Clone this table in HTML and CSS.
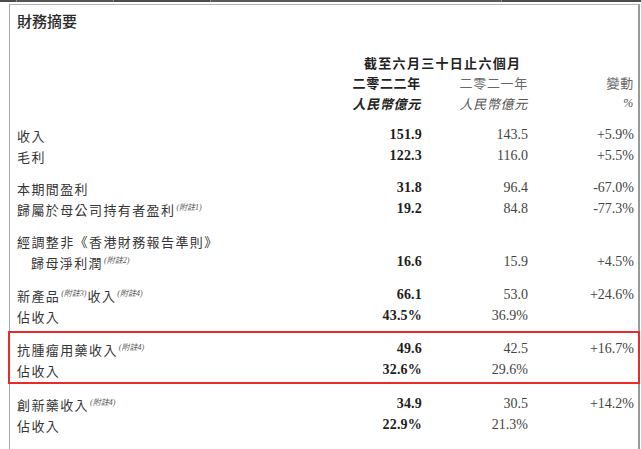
FILE: index.html
```html
<!DOCTYPE html>
<html lang="zh-Hant">
<head>
<meta charset="utf-8">
<title>財務摘要</title>
<link rel="stylesheet" href="styles.css">
</head>
<body>
<div class="strip">
  <span class="seg seg-a"></span>
  <span class="seg seg-b"></span>
  <span class="seg seg-c"></span>
  <span class="seg seg-d"></span>
  <span class="seg seg-e"></span>
</div>
<div class="frame">
  <h1 class="title">財務摘要</h1>

  <div class="head">
    <div class="row">
      <span class="period">截至六月三十日止六個月</span>
    </div>
    <div class="row">
      <span></span>
      <span class="cell hd-strong">二零二二年</span>
      <span class="cell hd-light">二零二一年</span>
      <span class="cell hd-light">變動</span>
    </div>
    <div class="row">
      <span></span>
      <span class="cell unit-strong">人民幣億元</span>
      <span class="cell unit-light">人民幣億元</span>
      <span class="cell unit-light pct">%</span>
    </div>
  </div>

  <div class="group first">
    <div class="row">
      <span class="label">收入</span>
      <span class="cell num b">151.9</span>
      <span class="cell num">143.5</span>
      <span class="cell num">+5.9%</span>
    </div>
    <div class="row">
      <span class="label">毛利</span>
      <span class="cell num b">122.3</span>
      <span class="cell num">116.0</span>
      <span class="cell num">+5.5%</span>
    </div>
  </div>

  <div class="group">
    <div class="row">
      <span class="label">本期間盈利</span>
      <span class="cell num b">31.8</span>
      <span class="cell num">96.4</span>
      <span class="cell num">-67.0%</span>
    </div>
    <div class="row">
      <span class="label">歸屬於母公司持有者盈利<span class="note">(附註1)</span></span>
      <span class="cell num b">19.2</span>
      <span class="cell num">84.8</span>
      <span class="cell num">-77.3%</span>
    </div>
  </div>

  <div class="group">
    <div class="row">
      <span class="label">經調整非《香港財務報告準則》</span>
    </div>
    <div class="row">
      <span class="label indent">歸母淨利潤<span class="note">(附註2)</span></span>
      <span class="cell num b">16.6</span>
      <span class="cell num">15.9</span>
      <span class="cell num">+4.5%</span>
    </div>
  </div>

  <div class="group g4">
    <div class="row">
      <span class="label">新產品<span class="note">(附註3)</span>收入<span class="note">(附註4)</span></span>
      <span class="cell num b">66.1</span>
      <span class="cell num">53.0</span>
      <span class="cell num">+24.6%</span>
    </div>
    <div class="row">
      <span class="label">佔收入</span>
      <span class="cell num b">43.5%</span>
      <span class="cell num">36.9%</span>
      <span></span>
    </div>
  </div>

  <div class="group highlight">
    <div class="row">
      <span class="label">抗腫瘤用藥收入<span class="note">(附註4)</span></span>
      <span class="cell num b">49.6</span>
      <span class="cell num">42.5</span>
      <span class="cell num">+16.7%</span>
    </div>
    <div class="row">
      <span class="label">佔收入</span>
      <span class="cell num b">32.6%</span>
      <span class="cell num">29.6%</span>
      <span></span>
    </div>
  </div>

  <div class="group after">
    <div class="row">
      <span class="label">創新藥收入<span class="note">(附註4)</span></span>
      <span class="cell num b">34.9</span>
      <span class="cell num">30.5</span>
      <span class="cell num">+14.2%</span>
    </div>
    <div class="row">
      <span class="label">佔收入</span>
      <span class="cell num b">22.9%</span>
      <span class="cell num">21.3%</span>
      <span></span>
    </div>
  </div>
</div>
</body>
</html>
```

FILE: styles.css
```css
html, body {
  margin: 0;
  padding: 0;
  background: #ffffff;
  height: 449px;
  overflow: hidden;
}

body {
  font-family: "Noto Sans CJK TC", "Noto Sans CJK SC", sans-serif;
  color: #333;
}

/* thin toolbar strip at the very top */
.strip {
  display: flex;
  height: 2px;
  background: #4b4b4b;
}
.seg {
  height: 2px;
  border-right: 1px solid #8a8a8a;
}
.seg-a { width: 16px; }
.seg-b { width: 96px; background: #555; }
.seg-c { width: 96px; }
.seg-d { width: 290px; background: #5a5a5a; }
.seg-e { flex: 1; border-right: none; }

/* document frame */
.frame {
  margin: 2px 1px 0 9px;
  border-top: 1px solid #b5b5b5;
  border-left: 1px solid #a8a8a8;
  border-right: 2px solid #9a9a9a;
  height: 460px;
  box-sizing: border-box;
}

.title {
  margin: 6px 0 0 7px;
  font-size: 15px;
  line-height: 20px;
  font-weight: 500;
  color: #2b2b2b;
  letter-spacing: 0;
}

.head {
  margin-top: 21px;
}
.head .row {
  height: 20.5px;
}

.row {
  display: grid;
  grid-template-columns: 1fr 106px 106px 106px;
  align-items: center;
  height: 21px;
  padding: 0 4px 0 7px;
}

.period {
  grid-column: 2 / 4;
  padding-left: 48px;
  font-size: 13px;
  font-weight: 700;
  letter-spacing: 1.3px;
  color: #222;
  white-space: nowrap;
}

.cell {
  text-align: right;
  white-space: nowrap;
}

.hd-strong {
  font-size: 13px;
  font-weight: 700;
  letter-spacing: 0.7px;
  color: #222;
  padding-right: 1px;
}
.hd-light {
  font-size: 13px;
  font-weight: 400;
  letter-spacing: 0.7px;
  color: #676767;
}

.unit-strong {
  font-size: 13px;
  font-weight: 700;
  font-style: italic;
  letter-spacing: 0.7px;
  color: #222;
  padding-right: 1px;
}
.unit-light {
  font-size: 13px;
  font-style: italic;
  font-weight: 400;
  letter-spacing: 0.7px;
  color: #555;
}
.pct {
  font-family: "Liberation Serif", serif;
  font-size: 12px;
}

.group {
  margin-top: 11px;
}
.group.g4 {
  margin-top: 12px;
}

.label {
  font-size: 13px;
  letter-spacing: 1.4px;
  color: #353535;
  white-space: nowrap;
}
.label.indent {
  padding-left: 14px;
}

.note {
  font-family: "Liberation Serif", "Noto Sans CJK TC", serif;
  font-style: italic;
  font-size: 8px;
  letter-spacing: 0;
  color: #555;
  vertical-align: 5px;
  margin: 0 1px 0 1px;
}

.num {
  font-family: "Liberation Serif", "Times New Roman", serif;
  font-size: 14px;
  color: #444;
}
.num.b {
  font-weight: 700;
  color: #1e1e1e;
  letter-spacing: 0.2px;
}

/* red highlight box over the anti-tumour rows */
.highlight {
  margin: 4px -2px 0 -2px;
  border: 2px solid #ea2a2a;
  padding: 6px 0 0 0;
  height: 53px;
  box-sizing: border-box;
}
.highlight .row {
  padding-left: 7px;
  padding-right: 4px;
}

.group.after {
  margin-top: 10px;
}
```
